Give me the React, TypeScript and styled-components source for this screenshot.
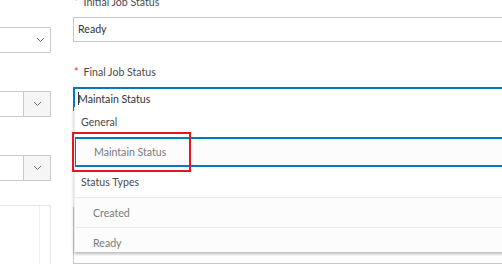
import styled, { createGlobalStyle } from 'styled-components';

const GlobalStyle = createGlobalStyle`
  html, body {
    margin: 0;
    padding: 0;
    background: #ffffff;
    overflow: hidden;
  }
  body {
    font-family: Lato, "Noto Sans", sans-serif;
    font-size: 10.6px;
    color: #323232;
  }
`;

const Page = styled.div`
  width: 640px;
  height: 264px;
  display: flex;
  gap: 22px;
  overflow: hidden;
`;

const LeftColumn = styled.div`
  width: 51px;
  flex: none;
  display: flex;
  flex-direction: column;
  padding-top: 27px;
`;

const SelectBox = styled.div`
  height: 26px;
  box-sizing: border-box;
  border: 1px solid #cacaca;
  border-left: none;
  background: #fff;
  display: flex;
  justify-content: flex-end;
  margin-bottom: 38px;
`;

const ChevronCell = styled.div<{ $split?: boolean }>`
  width: ${(p) => (p.$split ? '26px' : '20px')};
  display: flex;
  align-items: center;
  justify-content: center;
  background: ${(p) => (p.$split ? '#f5f5f5' : 'transparent')};
  border-left: ${(p) => (p.$split ? '1px solid #cacaca' : 'none')};
`;

const LeftPanel = styled.div`
  flex: 1;
  border: 1px solid #e6e6e6;
  border-left: none;
  border-bottom: none;
  display: flex;
  justify-content: flex-end;
  margin-top: -14px;
`;

const PanelStrip = styled.div`
  width: 10px;
  border-left: 1px solid #f0f0f0;
`;

const RightColumn = styled.div`
  flex: 1;
  position: relative;
  display: flex;
  flex-direction: column;
  margin-top: -6px;
`;

const Label = styled.div`
  height: 16px;
  line-height: 16px;
  color: #4a4a4a;
  padding-left: 1px;
  margin-bottom: 7px;
  white-space: nowrap;
`;

const Required = styled.span`
  color: #d83020;
  margin-right: 5px;
`;

const Input = styled.div<{ $focused?: boolean }>`
  height: ${(p) => (p.$focused ? '25px' : '26px')};
  box-sizing: border-box;
  border: ${(p) => (p.$focused ? '2px solid #0079c1' : '1px solid #c6c6c6')};
  display: flex;
  align-items: center;
  padding-left: ${(p) => (p.$focused ? '3px' : '4px')};
  color: #323232;
  margin-bottom: 22px;
  white-space: nowrap;
`;

const Caret = styled.span`
  display: inline-block;
  width: 1px;
  height: 13px;
  background: #323232;
  margin-right: -1px;
`;

const TextArea = styled.div`
  height: 60px;
  box-sizing: border-box;
  border: 1px solid #c6c6c6;
  margin-top: 74px;
`;

const Menu = styled.div`
  position: absolute;
  top: 113px;
  left: 1px;
  right: 0;
  height: 145px;
  overflow: hidden;
  background: #fdfdfd;
  box-shadow: 0 2px 3px rgba(0, 0, 0, 0.28);
  border-left: 1px solid #ececec;
`;

const GroupHeader = styled.div`
  height: 30px;
  display: flex;
  align-items: center;
  padding-left: 6px;
  color: #4a4a4a;
  background: #fff;
`;

const MenuItem = styled.div<{ $active?: boolean }>`
  height: 30px;
  box-sizing: border-box;
  display: flex;
  align-items: center;
  padding-left: 18px;
  color: #7a7a7a;
  border-top: ${(p) => (p.$active ? '2px solid #0079c1' : '1px solid #ebebeb')};
  border-bottom: ${(p) => (p.$active ? '2px solid #0079c1' : 'none')};
  border-left: ${(p) => (p.$active ? '2px solid #0079c1' : 'none')};
  margin-left: ${(p) => (p.$active ? '-1px' : '0')};
  background: #fcfcfc;
`;

const Highlight = styled.div`
  position: absolute;
  top: 138px;
  left: -1px;
  width: 115px;
  height: 36px;
  border: 2px solid #e5161d;
  pointer-events: none;
`;

const Chevron = () => (
  <svg width="9" height="6" viewBox="0 0 9 6" fill="none">
    <path d="M1 1l3.5 3.5L8 1" stroke="#6e6e6e" strokeWidth="1" />
  </svg>
);

const App = () => (
  <>
    <GlobalStyle />
    <Page>
      <LeftColumn>
        <SelectBox>
          <ChevronCell><Chevron /></ChevronCell>
        </SelectBox>
        <SelectBox>
          <ChevronCell $split><Chevron /></ChevronCell>
        </SelectBox>
        <SelectBox>
          <ChevronCell $split><Chevron /></ChevronCell>
        </SelectBox>
        <LeftPanel>
          <PanelStrip />
        </LeftPanel>
      </LeftColumn>
      <RightColumn>
        <Label><Required>*</Required>Initial Job Status</Label>
        <Input>Ready</Input>
        <Label><Required>*</Required>Final Job Status</Label>
        <Input $focused><Caret />Maintain Status</Input>
        <TextArea />
        <Menu>
          <GroupHeader>General</GroupHeader>
          <MenuItem $active>Maintain Status</MenuItem>
          <GroupHeader>Status Types</GroupHeader>
          <MenuItem>Created</MenuItem>
          <MenuItem>Ready</MenuItem>
        </Menu>
        <Highlight />
      </RightColumn>
    </Page>
  </>
);

export default App;
